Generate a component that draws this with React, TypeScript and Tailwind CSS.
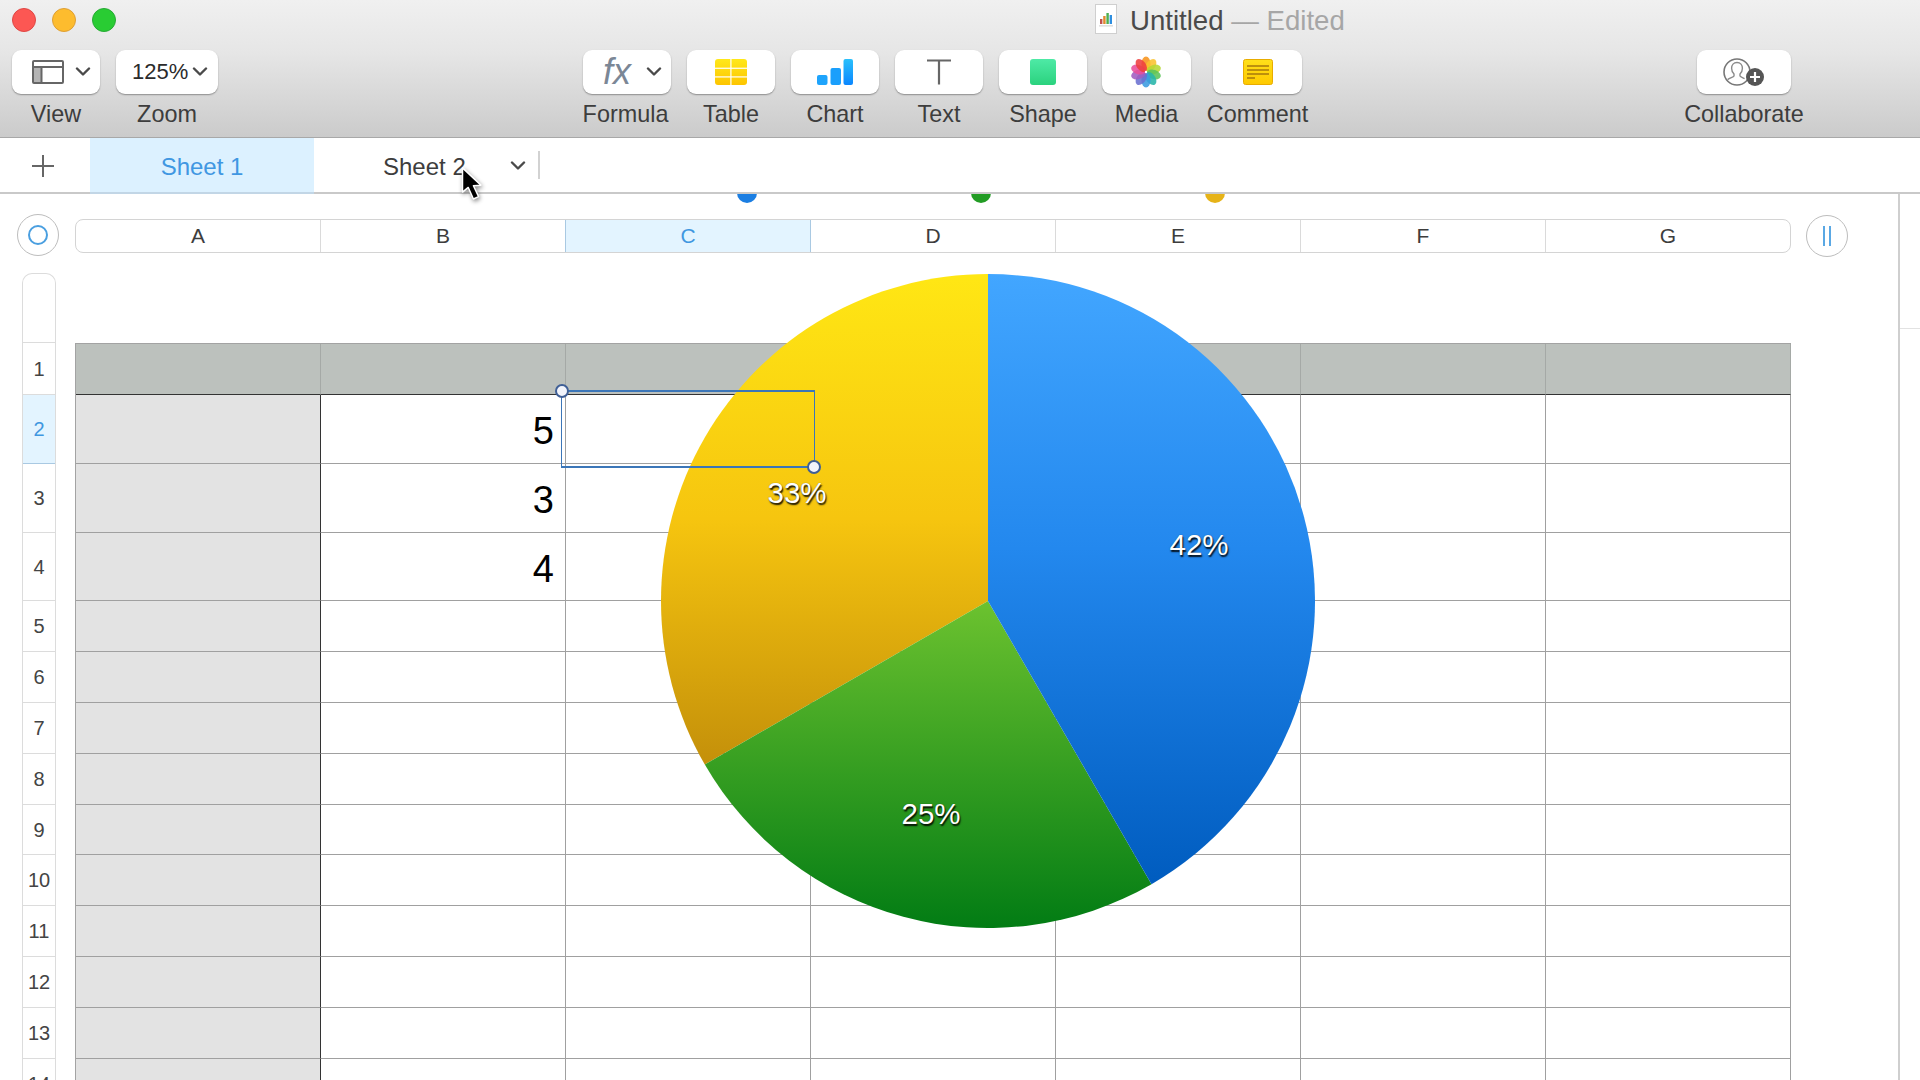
import React from "react";

const Chevron = () => (
  <svg width="16" height="10" viewBox="0 0 16 10" className="shrink-0">
    <polyline points="2,1.5 8,7.5 14,1.5" fill="none" stroke="#4a4a4a" strokeWidth="2.4" strokeLinecap="round" strokeLinejoin="round" />
  </svg>
);

const Tool = ({ label, className, btn, labelClass, children }: { label: string; className: string; btn?: string; labelClass?: string; children: React.ReactNode }) => (
  <div className={"flex flex-col items-center shrink-0 " + className}>
    <div className={"w-full h-[44px] bg-white rounded-[9px] shadow-[0_1px_1.5px_rgba(0,0,0,0.35)] flex items-center " + (btn ?? "justify-center")}>
      {children}
    </div>
    <div className={"mt-[7px] h-[26px] leading-[26px] text-[23.4px] text-[#3d3d3d] whitespace-nowrap " + (labelClass ?? "")}>{label}</div>
  </div>
);

const petals = ["#f7941d", "#f9c22e", "#b5d733", "#5cc45a", "#27b5a8", "#3a9be0", "#6a6fd0", "#a05cc0", "#e84f9a", "#ee3f3f"];

const rows: { n: number; h: string; val?: string }[] = [
  { n: 1, h: "h-[52px]" },
  { n: 2, h: "h-[69px]", val: "5" },
  { n: 3, h: "h-[69px]", val: "3" },
  { n: 4, h: "h-[68px]", val: "4" },
  { n: 5, h: "h-[50.9px]" },
  { n: 6, h: "h-[50.9px]" },
  { n: 7, h: "h-[50.9px]" },
  { n: 8, h: "h-[50.9px]" },
  { n: 9, h: "h-[50.9px]" },
  { n: 10, h: "h-[50.9px]" },
  { n: 11, h: "h-[50.9px]" },
  { n: 12, h: "h-[50.9px]" },
  { n: 13, h: "h-[50.9px]" },
  { n: 14, h: "h-[50.9px]" },
];

const cols = ["A", "B", "C", "D", "E", "F", "G"];

function pt(deg: number) {
  const a = (deg * Math.PI) / 180;
  return `${327 + 327 * Math.sin(a)} ${327 - 327 * Math.cos(a)}`;
}
const slice = (a: number, b: number) => `M327 327 L${pt(a)} A327 327 0 0 1 ${pt(b)} Z`;

export default function App() {
  return (
    <div className="relative w-[1920px] h-[1080px] overflow-hidden bg-white font-['Liberation_Sans',Arial,sans-serif] text-[#3d3d3d]">
      {/* legend dots peeking under the tab bar */}
      <div className="absolute top-[183px] left-[737px] w-[20px] h-[20px] rounded-full bg-[#1b7ee2]" />
      <div className="absolute top-[183px] left-[971px] w-[20px] h-[20px] rounded-full bg-[#229c24]" />
      <div className="absolute top-[183px] left-[1205px] w-[20px] h-[20px] rounded-full bg-[#e6b318]" />

      {/* Title + toolbar */}
      <header className="relative z-10 h-[138px] border-b border-[#a8a8a8] bg-[linear-gradient(#f0f0f0,#e6e6e6_38%,#cbcbcb)]">
        <div className="h-[50px] flex items-start">
          <div className="flex gap-[16px] ml-[12px] mt-[8px]">
            <div className="w-[24px] h-[24px] rounded-full bg-[#fc5753] border border-[#df4744]" />
            <div className="w-[24px] h-[24px] rounded-full bg-[#fdbc2e] border border-[#de9f34]" />
            <div className="w-[24px] h-[24px] rounded-full bg-[#29cc33] border border-[#27aa35]" />
          </div>
          <div className="ml-[979px] mt-[4px] w-[22px] h-[30px] bg-white border border-[#cfcfcf] flex items-center justify-center shrink-0">
            <svg width="16" height="16" viewBox="0 0 16 16">
              <rect x="2" y="8" width="2.4" height="5" fill="#c0504d" />
              <rect x="5.2" y="5" width="2.4" height="8" fill="#e08a2e" />
              <rect x="8.4" y="2" width="2.4" height="11" fill="#4caf50" />
              <rect x="11.6" y="4" width="2.4" height="9" fill="#2f8fe0" />
              <rect x="1" y="14.4" width="14" height="1" fill="#cccccc" />
            </svg>
          </div>
          <div className="ml-[13px] mt-[6px] h-[30px] leading-[30px] text-[27.6px] whitespace-nowrap text-[#4a4a4a]">
            Untitled <span className="text-[#a6a6a6]">— Edited</span>
          </div>
        </div>

        <div className="flex items-start">
          <Tool label="View" className="w-[88px] ml-[12px]" btn="pl-[20px] gap-[11px]">
            <svg width="32" height="24" viewBox="0 0 32 24" className="shrink-0">
              <rect x="1" y="7" width="8.5" height="16" fill="#b4b4b4" />
              <rect x="1" y="1" width="30" height="22" rx="1" fill="none" stroke="#666666" strokeWidth="2" />
              <line x1="1" y1="7" x2="31" y2="7" stroke="#666666" strokeWidth="2" />
              <line x1="9.5" y1="7" x2="9.5" y2="23" stroke="#666666" strokeWidth="2" />
            </svg>
            <Chevron />
          </Tool>
          <Tool label="Zoom" className="w-[102px] ml-[16px]" btn="pl-[16px] gap-[4px]">
            <span className="text-[22px] text-[#2b2b2b] leading-none">125%</span>
            <Chevron />
          </Tool>
          <Tool label="Formula" className="w-[88px] ml-[365px]" btn="pl-[20px] gap-[14px]" labelClass="pr-[3px]">
            <span className="w-[29px] text-[36px] italic text-[#7b8796] leading-none whitespace-nowrap">fx</span>
            <Chevron />
          </Tool>
          <Tool label="Table" className="w-[88px] ml-[16px]">
            <svg width="32" height="26" viewBox="0 0 32 26">
              <defs>
                <linearGradient id="tb" x1="0" y1="0" x2="0" y2="1">
                  <stop offset="0" stopColor="#ffe81a" />
                  <stop offset="1" stopColor="#fdc500" />
                </linearGradient>
              </defs>
              <rect width="32" height="26" rx="3" fill="url(#tb)" />
              <rect x="15.2" y="0" width="1.4" height="26" fill="#fff" opacity="0.85" />
              <rect x="0" y="8.6" width="32" height="1.4" fill="#fff" opacity="0.85" />
              <rect x="0" y="17.2" width="32" height="1.4" fill="#fff" opacity="0.85" />
            </svg>
          </Tool>
          <Tool label="Chart" className="w-[88px] ml-[16px]">
            <svg width="36" height="26" viewBox="0 0 36 26">
              <defs>
                <linearGradient id="ch" x1="0" y1="0" x2="0" y2="1">
                  <stop offset="0" stopColor="#2ac0fb" />
                  <stop offset="1" stopColor="#0a86ff" />
                </linearGradient>
              </defs>
              <rect x="0" y="16" width="10.5" height="10" rx="2" fill="#1ea4fc" />
              <rect x="13.5" y="9" width="10.5" height="17" rx="2" fill="#1a9ffc" />
              <rect x="26.5" y="0" width="9.5" height="26" rx="2" fill="url(#ch)" />
            </svg>
          </Tool>
          <Tool label="Text" className="w-[88px] ml-[16px]">
            <svg width="26" height="26" viewBox="0 0 26 26">
              <path d="M1 1.5H25M13 1.5V25.5" fill="none" stroke="#666666" strokeWidth="2.2" />
            </svg>
          </Tool>
          <Tool label="Shape" className="w-[88px] ml-[16px]">
            <div className="w-[26px] h-[26px] rounded-[3px] bg-[linear-gradient(#4eeaa6,#2bd27e)]" />
          </Tool>
          <Tool label="Media" className="w-[89px] ml-[15px]" btn="justify-center pr-[2px]">
            <svg width="32" height="32" viewBox="-16 -16 32 32">
              {petals.map((c, i) => (
                <ellipse key={i} cx="0" cy="-8" rx="4.6" ry="7.4" fill={c} opacity="0.88" transform={`rotate(${i * 36})`} />
              ))}
              <circle r="1.2" fill="#fff" />
            </svg>
          </Tool>
          <Tool label="Comment" className="w-[89px] ml-[22px]">
            <svg width="30" height="26" viewBox="0 0 30 26">
              <defs>
                <linearGradient id="cm" x1="0" y1="0" x2="0" y2="1">
                  <stop offset="0" stopColor="#ffe01a" />
                  <stop offset="1" stopColor="#fec900" />
                </linearGradient>
              </defs>
              <rect x="0.5" y="0.5" width="29" height="25" rx="2" fill="url(#cm)" stroke="#e8ac00" />
              <path d="M4 7H26M4 11H26M4 15H26M4 19H12" stroke="#a8790c" strokeWidth="1.6" />
            </svg>
          </Tool>
          <Tool label="Collaborate" className="w-[94px] ml-[395px]">
            <svg width="44" height="36" viewBox="0 0 44 36">
              <circle cx="15" cy="18" r="13" fill="#fff" stroke="#777777" strokeWidth="1.6" />
              <path d="M15 8.5c-3.4 0-5.4 2.6-5.4 5.8 0 2.6 1 4.4 2.4 5.7v2c-.6 1.2-4 1.8-6.4 3.6M15 8.5c3.4 0 5.4 2.6 5.4 5.8 0 2.6-1 4.4-2.4 5.7v2c.5 1 2.6 1.6 4.6 2.6" fill="none" stroke="#8a8a8a" strokeWidth="1.4" />
              <circle cx="33" cy="23" r="9" fill="#555555" />
              <path d="M33 18V28M28 23H38" stroke="#fff" strokeWidth="2.2" />
            </svg>
          </Tool>
        </div>
      </header>

      {/* Sheet tabs */}
      <div className="relative z-10 h-[56px] border-b-2 border-[#c9c9c9] bg-white flex items-stretch">
        <div className="w-[90px] flex items-center pl-[32px] pt-[2px] shrink-0">
          <svg width="22" height="22" viewBox="0 0 22 22">
            <path d="M11 0V22M0 11H22" stroke="#666666" strokeWidth="2" />
          </svg>
        </div>
        <div className="w-[224px] -mb-[2px] pt-[3px] bg-[#dcf1ff] border-b-2 border-[#c2d6e6] flex items-center justify-center text-[24px] text-[#4097e2] shrink-0">
          Sheet 1
        </div>
        <div className="ml-[69px] pt-[3px] flex items-center text-[24px] text-[#3d3d3d] whitespace-nowrap w-[127px] shrink-0">Sheet 2</div>
        <div className="flex items-center pt-[1px] shrink-0">
          <Chevron />
        </div>
        <div className="ml-[12px] my-[13px] w-[2px] bg-[#d2d2d2] shrink-0" />
      </div>

      {/* Sidebar divider */}
      <div className="absolute top-[138px] right-[20px] bottom-0 w-[2px] bg-[#cfcfcf]" />
      <div className="absolute top-[328px] right-0 w-[20px] h-[1px] bg-[#e2e2e2]" />

      {/* Column header */}
      <div className="flex items-center mt-[20px] h-[42px]">
        <div className="ml-[17px] w-[42px] h-[42px] rounded-full border border-[#bdbdbd] flex items-center justify-center shrink-0">
          <div className="w-[20px] h-[20px] rounded-full border-2 border-[#4a9fe0]" />
        </div>
        <div className="ml-[16px] w-[1716px] h-[34px] flex rounded-[8px] border border-[#d4d4d4] overflow-hidden shrink-0 mt-[2px]">
          {cols.map((c, i) => (
            <div
              key={c}
              className={
                "flex-1 flex items-center justify-center text-[21px] " +
                (c === "C"
                  ? "bg-[#e3f4ff] text-[#3f97e0] border-x border-[#a9c9e2]"
                  : i === 6 || c === "B"
                    ? "text-[#3d3d3d]"
                    : "text-[#3d3d3d] border-r border-[#dadada]")
              }
            >
              {c}
            </div>
          ))}
        </div>
        <div className="ml-[15px] mt-[1px] w-[42px] h-[42px] rounded-full border border-[#bdbdbd] flex items-center justify-center gap-[4px] shrink-0">
          <div className="w-[2px] h-[20px] bg-[#5aa8e4]" />
          <div className="w-[2px] h-[20px] bg-[#5aa8e4]" />
        </div>
      </div>

      {/* Row header + table */}
      <div className="flex mt-[17px] items-start">
        <div className="ml-[22px] w-[34px] shrink-0 flex flex-col border-x border-[#dcdcdc] border-t rounded-t-[10px]">
          <div className="h-[69px] border-b border-[#dcdcdc]" />
          {rows.map((r) => (
            <div
              key={r.n}
              className={
                r.h +
                " shrink-0 flex items-center justify-center text-[20px] border-b " +
                (r.n === 2 ? "bg-[#e3f4ff] text-[#3f97e0] border-[#a9c9e2]" : "text-[#444444] border-[#dcdcdc]")
              }
            >
              {r.n}
            </div>
          ))}
        </div>

        <div className="relative ml-[19px] pt-[70px] w-[1716px] shrink-0">
          <div className="border-l border-t border-[#a3a3a3]">
            {rows.map((r) => (
              <div key={r.n} className={(r.n === 1 ? "h-[51px]" : r.h) + " flex"}>
                {cols.map((c, i) => (
                  <div
                    key={c}
                    className={
                      "w-[245px] shrink-0 border-b border-r flex items-center justify-end pr-[11px] pt-[4px] text-[38px] leading-none text-black " +
                      (r.n === 1
                        ? "bg-[#bcc1bd] border-b-[#333333] border-r-[#a5a9a6]"
                        : i === 0
                          ? "bg-[#e3e3e3] border-b-[#a0a0a0] border-r-[#333333]"
                          : "bg-white border-b-[#a0a0a0] border-r-[#a0a0a0]")
                    }
                  >
                    {c === "B" ? r.val : null}
                  </div>
                ))}
              </div>
            ))}
          </div>
        </div>
      </div>

      {/* Pie chart floating over the table */}
      <div className="absolute left-[661px] top-[274px] w-[654px] h-[654px]">
        <svg width="654" height="654" viewBox="0 0 654 654" className="block">
          <defs>
            <linearGradient id="pb" gradientUnits="userSpaceOnUse" x1="0" y1="0" x2="0" y2="610">
              <stop offset="0" stopColor="#42a6ff" />
              <stop offset="0.45" stopColor="#2388ee" />
              <stop offset="1" stopColor="#005cbf" />
            </linearGradient>
            <linearGradient id="pg" gradientUnits="userSpaceOnUse" x1="0" y1="327" x2="0" y2="654">
              <stop offset="0" stopColor="#6cc22f" />
              <stop offset="1" stopColor="#027c14" />
            </linearGradient>
            <linearGradient id="py" gradientUnits="userSpaceOnUse" x1="0" y1="0" x2="0" y2="490">
              <stop offset="0" stopColor="#ffe714" />
              <stop offset="0.5" stopColor="#f6c50f" />
              <stop offset="1" stopColor="#c4900a" />
            </linearGradient>
          </defs>
          <path d={slice(240, 360)} fill="url(#py)" />
          <path d={slice(150, 240)} fill="url(#pg)" />
          <path d={slice(0, 150)} fill="url(#pb)" />
        </svg>
        <div className="absolute left-[508px] top-[254px] w-[60px] h-[34px] leading-[34px] text-center text-[29.5px] text-white [text-shadow:1px_2px_1.5px_rgba(0,0,0,0.9),0_0_1px_rgba(0,0,0,0.5)]">42%</div>
        <div className="absolute left-[106px] top-[202px] w-[60px] h-[34px] leading-[34px] text-center text-[29.5px] text-white [text-shadow:1px_2px_1.5px_rgba(0,0,0,0.9),0_0_1px_rgba(0,0,0,0.5)]">33%</div>
        <div className="absolute left-[240px] top-[523px] w-[60px] h-[34px] leading-[34px] text-center text-[29.5px] text-white [text-shadow:1px_2px_1.5px_rgba(0,0,0,0.9),0_0_1px_rgba(0,0,0,0.5)]">25%</div>
      </div>

      {/* Selection frame */}
      <div className="absolute left-[561px] top-[390px] w-[254px] h-[78px] border-y-2 border-x border-[#3b76b8]" />
      <div className="absolute left-[555px] top-[384px] w-[14px] h-[14px] rounded-full bg-[#f2f4fb] border-2 border-[#3f5f96]" />
      <div className="absolute left-[807px] top-[460px] w-[14px] h-[14px] rounded-full bg-[#f2f4fb] border-2 border-[#3f5f96]" />

      {/* Mouse pointer */}
      <svg className="absolute left-[455px] top-[161px] z-20 drop-shadow-[1px_2px_2px_rgba(0,0,0,0.45)]" width="38" height="46" viewBox="0 0 32 40">
        <path d="M6 6 L6 27 L11 23 L15.5 33 L20 31 L15.5 21.5 L22 21 Z" fill="#000" stroke="#fff" strokeWidth="1.3" strokeLinejoin="round" />
      </svg>
    </div>
  );
}
